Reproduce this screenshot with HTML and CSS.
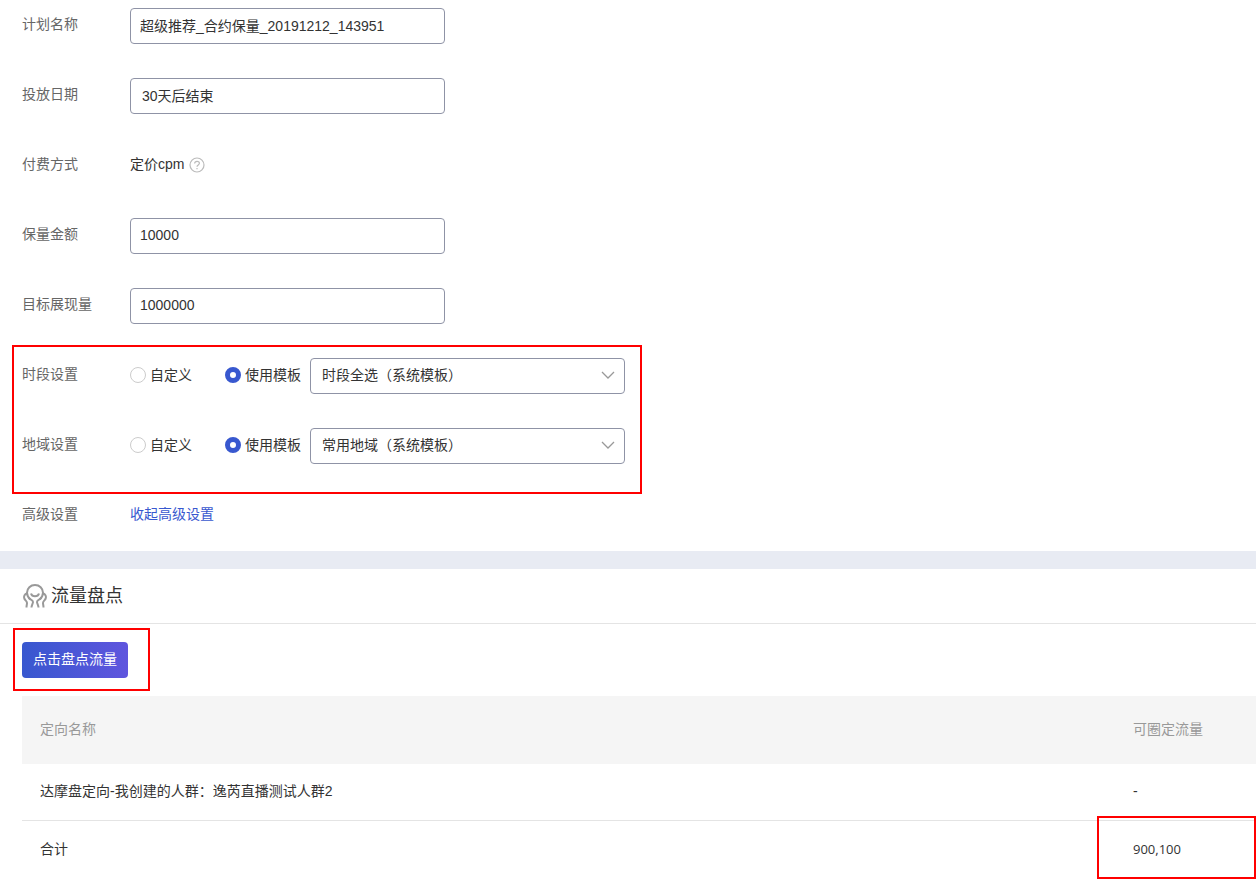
FILE: index.html
```html
<!doctype html>
<html lang="zh-CN">
  <head>
    <meta charset="UTF-8" />
    <meta name="viewport" content="width=device-width, initial-scale=1.0" />
    <title>计划设置</title>
    <link rel="stylesheet" href="styles.css">
  </head>
  <body>
    <form class="plan-form">
      <div class="row">
        <label class="row-label" for="plan-name">计划名称</label>
        <input class="field" type="text" id="plan-name" value="超级推荐_合约保量_20191212_143951" />
      </div>
      <div class="row">
        <label class="row-label" for="plan-date">投放日期</label>
        <input class="field field-date" type="text" id="plan-date" value="30天后结束" />
      </div>
      <div class="row">
        <span class="row-label">付费方式</span>
        <span class="row-text">定价cpm</span>
        <svg class="help" viewBox="0 0 16 16" width="16" height="16" fill="none" stroke="#bbb" stroke-width="1.2">
          <circle cx="8" cy="8" r="7" />
          <path d="M5.600 6.500C5.600 5 6.600 4.300 8 4.300s2.400.8 2.400 2C10.400 7.900 8 7.900 8 9.700" />
          <path d="M8 10.900v1.300" />
        </svg>
      </div>
      <div class="row">
        <label class="row-label" for="budget">保量金额</label>
        <input class="field" type="text" id="budget" value="10000" />
      </div>
      <div class="row">
        <label class="row-label" for="target">目标展现量</label>
        <input class="field" type="text" id="target" value="1000000" />
      </div>

      <div class="template-group">
        <div class="row">
          <span class="row-label">时段设置</span>
          <label class="radio"><input type="radio" name="time" />自定义</label>
          <label class="radio"><input type="radio" name="time" checked />使用模板</label>
          <div class="select-wrap">
            <select class="field" aria-label="时段设置">
              <option>时段全选（系统模板）</option>
            </select>
            <svg class="arrow" viewBox="0 0 14 8" width="14" height="8" fill="none" stroke="#999" stroke-width="1.3">
              <path d="M1 1l6 6 6-6" />
            </svg>
          </div>
        </div>
        <div class="row">
          <span class="row-label">地域设置</span>
          <label class="radio"><input type="radio" name="area" />自定义</label>
          <label class="radio"><input type="radio" name="area" checked />使用模板</label>
          <div class="select-wrap">
            <select class="field" aria-label="地域设置">
              <option>常用地域（系统模板）</option>
            </select>
            <svg class="arrow" viewBox="0 0 14 8" width="14" height="8" fill="none" stroke="#999" stroke-width="1.3">
              <path d="M1 1l6 6 6-6" />
            </svg>
          </div>
        </div>
      </div>

      <div class="row">
        <span class="row-label">高级设置</span>
        <a class="row-text link" href="#">收起高级设置</a>
      </div>
    </form>

    <section class="flow">
      <h2 class="flow-title">
        <svg viewBox="0 0 26 26" width="26" height="26" fill="none" stroke="#999" stroke-width="2">
          <path d="M8.500 16.500C6.200 14.500 5 12.500 5 9.800 5 5.300 8.500 2 13 2s8 3.300 8 7.800c0 2.700-1.200 4.700-3.500 6.700" />
          <path d="M9 10.500c1 3.800 7 3.800 8 0" />
          <path d="M5.200 10.200C2.500 11 1.500 13.500 2.300 15.500c.8 1.800 2.700 2.500 2.700 4.500 0 1.300-.5 2.500-.5 4.500" />
          <path d="M20.800 10.200c2.700.8 3.700 3.300 2.900 5.300-.8 1.800-2.700 2.500-2.700 4.500 0 1.300.5 2.500.5 4.500" />
          <path d="M6.500 14.500c1 2.500 4.500 2 4.500 4.500 0 1.500-1.500 3-1.500 5.500" />
          <path d="M19.500 14.500c-1 2.500-4.500 2-4.500 4.500 0 1.500 1.500 3 1.500 5.500" />
        </svg>
        流量盘点
      </h2>
      <div class="flow-action">
        <button class="btn" type="button">点击盘点流量</button>
      </div>
      <table class="flow-table">
        <thead>
          <tr>
            <th>定向名称</th>
            <th class="col-flow">可圈定流量</th>
          </tr>
        </thead>
        <tbody>
          <tr>
            <td>达摩盘定向-我创建的人群：逸芮直播测试人群2</td>
            <td>-</td>
          </tr>
          <tr>
            <td>合计</td>
            <td class="total">900,100</td>
          </tr>
        </tbody>
      </table>
    </section>
  </body>
</html>
```

FILE: styles.css
```css
*,
*::after {
  margin: 0;
  padding: 0;
  box-sizing: border-box;
}

body {
  background: #fff;
  color: #333;
  font-family: "Liberation Sans", "Noto Sans CJK SC", sans-serif;
  font-size: 14px;
  line-height: 20px;
  overflow-x: hidden;
}

input,
select,
button {
  font: inherit;
  color: inherit;
}

/* form */
.plan-form {
  padding: 8px 22px 17px;
}

.row {
  display: flex;
  align-items: center;
  height: 36px;
  margin-bottom: 34px;
}

.plan-form > .row:last-child {
  margin-bottom: 0;
}

.row-label {
  width: 108px;
  padding-bottom: 4px;
  color: #666;
}

.row-text {
  padding-bottom: 4px;
}

.field {
  width: 315px;
  height: 36px;
  padding: 0 9px 3px;
  border: 1px solid #8f93a6;
  border-radius: 4px;
  background: #fff;
  outline: none;
}

.field-date {
  padding-left: 11px;
}

.help {
  margin-left: 5px;
  margin-bottom: 2px;
}

.link {
  color: #3858cf;
  text-decoration: none;
}

/* red marks around the settings to check */
.template-group,
.flow-action,
.total {
  position: relative;
}

.template-group::after,
.flow-action::after,
.total::after {
  content: "";
  position: absolute;
  border: 2px solid #f00;
  pointer-events: none;
}

.template-group::after {
  top: -13px;
  left: -10px;
  width: 630px;
  height: 149px;
}

.radio {
  display: flex;
  align-items: center;
  gap: 4px;
  margin-right: 9px;
  padding-bottom: 2px;
}

.row-label + .radio {
  margin-right: 33px;
}

.radio input {
  appearance: none;
  width: 16px;
  height: 16px;
  border: 1px solid #ccc;
  border-radius: 50%;
}

.radio input:checked {
  border: 5px solid #3858cf;
}

.select-wrap {
  position: relative;
}

.select-wrap .field {
  appearance: none;
  display: block;
  padding-left: 11px;
}

.arrow {
  position: absolute;
  top: 13px;
  right: 10px;
  pointer-events: none;
}

/* flow check */
.flow {
  border-top: 18px solid #e8ebf3;
}

.flow-title {
  display: flex;
  align-items: center;
  gap: 3px;
  height: 55px;
  padding: 0 22px;
  border-bottom: 1px solid #e4e4e4;
  font-size: 18px;
  font-weight: 400;
}

.flow-action {
  padding: 18px 22px;
}

.flow-action::after {
  top: 4px;
  left: 13px;
  width: 137px;
  height: 63px;
}

.btn {
  display: block;
  height: 36px;
  padding: 0 11px 2px;
  border: none;
  border-radius: 4px;
  background: linear-gradient(90deg, #3858cf, #5f55de);
  color: #fff;
}

.flow-table {
  width: calc(100% - 22px);
  margin-left: 22px;
  border-collapse: separate;
  border-spacing: 0;
}

.flow-table th,
.flow-table td {
  padding: 0 18px 3px;
  text-align: left;
}

.flow-table th {
  height: 68px;
  background: #f5f5f5;
  color: #999;
  font-weight: 400;
}

.flow-table td {
  height: 57px;
  border-bottom: 1px solid #e4e4e4;
}

.flow-table tr:last-child td {
  height: 58px;
  border-bottom: none;
}

.col-flow {
  width: 141px;
}

.flow-table .total {
  font-family: "Open Sans", "Noto Sans CJK SC", sans-serif;
  font-size: 13px;
}

.total::after {
  top: -5px;
  right: 0;
  bottom: 0;
  left: -18px;
}
```
